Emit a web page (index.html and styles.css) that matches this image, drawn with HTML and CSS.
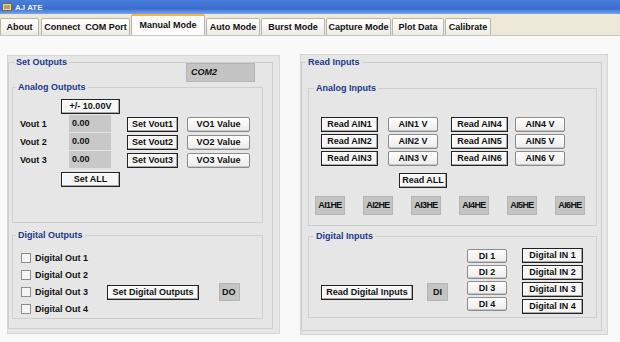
FILE: index.html
```
<!DOCTYPE html>
<html lang="en">
  <head>
    <meta charset="UTF-8" />
    <title>AJ ATE</title>
    <link rel="stylesheet" href="styles.css">
  </head>
  <body>
    <div class="titlebar">
      <svg class="app-icon" width="10" height="10" viewBox="0 0 10 10">
        <rect x="0.5" y="1.5" width="9" height="7" fill="#e8d9a0" stroke="#7a6a30" />
        <rect x="2" y="3" width="6" height="4" fill="#b8a060" />
      </svg>
      <span>AJ ATE</span>
    </div>

    <div class="tabs">
      <div class="tab tab-about">About</div>
      <div class="tab tab-connect">Connect&nbsp; COM Port</div>
      <div class="tab tab-manual active">Manual Mode</div>
      <div class="tab tab-auto">Auto Mode</div>
      <div class="tab tab-burst">Burst Mode</div>
      <div class="tab tab-capture">Capture Mode</div>
      <div class="tab tab-plot">Plot Data</div>
      <div class="tab tab-cal">Calibrate</div>
    </div>

    <div class="content">
      <!-- left side -->
      <div class="panel panel-left">
        <fieldset class="box outer-left">
          <legend>Set Outputs</legend>
          <div class="grey-box com">COM2</div>

          <fieldset class="box analog-out">
            <legend>Analog Outputs</legend>
            <div class="btn sq range">+/- 10.00V</div>
            <div class="vout-rows">
              <div class="vout-row">
                <span class="vout-label">Vout 1</span>
                <span class="textbox">0.00</span>
                <div class="btn sq set-vout">Set Vout1</div>
                <div class="btn round vo-value">VO1 Value</div>
              </div>
              <div class="vout-row">
                <span class="vout-label">Vout 2</span>
                <span class="textbox">0.00</span>
                <div class="btn sq set-vout">Set Vout2</div>
                <div class="btn round vo-value">VO2 Value</div>
              </div>
              <div class="vout-row">
                <span class="vout-label">Vout 3</span>
                <span class="textbox">0.00</span>
                <div class="btn sq set-vout">Set Vout3</div>
                <div class="btn round vo-value">VO3 Value</div>
              </div>
            </div>
            <div class="btn sq set-all">Set ALL</div>
          </fieldset>

          <fieldset class="box digital-out">
            <legend>Digital Outputs</legend>
            <div class="dout-body">
              <div class="checks">
                <label class="check-row"><span class="check"></span>Digital Out 1</label>
                <label class="check-row"><span class="check"></span>Digital Out 2</label>
                <label class="check-row"><span class="check"></span>Digital Out 3</label>
                <label class="check-row"><span class="check"></span>Digital Out 4</label>
              </div>
              <div class="btn sq set-dout">Set Digital Outputs</div>
              <div class="grey-box do-box">DO</div>
            </div>
          </fieldset>
        </fieldset>
      </div>

      <!-- right side -->
      <div class="panel panel-right">
        <fieldset class="box outer-right">
          <legend>Read Inputs</legend>

          <fieldset class="box analog-in">
            <legend>Analog Inputs</legend>
            <div class="ain-grid">
              <div class="ain-row">
                <div class="btn sq read-ain">Read AIN1</div>
                <div class="btn round ain-v">AIN1 V</div>
                <div class="btn sq read-ain second">Read AIN4</div>
                <div class="btn round ain-v last">AIN4 V</div>
              </div>
              <div class="ain-row">
                <div class="btn sq read-ain">Read AIN2</div>
                <div class="btn round ain-v">AIN2 V</div>
                <div class="btn sq read-ain second">Read AIN5</div>
                <div class="btn round ain-v last">AIN5 V</div>
              </div>
              <div class="ain-row">
                <div class="btn sq read-ain">Read AIN3</div>
                <div class="btn round ain-v">AIN3 V</div>
                <div class="btn sq read-ain second">Read AIN6</div>
                <div class="btn round ain-v last">AIN6 V</div>
              </div>
            </div>
            <div class="btn sq read-all">Read ALL</div>
            <div class="he-row">
              <div class="grey-box he">AI1HE</div>
              <div class="grey-box he">AI2HE</div>
              <div class="grey-box he">AI3HE</div>
              <div class="grey-box he">AI4HE</div>
              <div class="grey-box he">AI5HE</div>
              <div class="grey-box he">AI6HE</div>
            </div>
          </fieldset>

          <fieldset class="box digital-in">
            <legend>Digital Inputs</legend>
            <div class="din-body">
              <div class="btn sq read-din">Read Digital Inputs</div>
              <div class="grey-box di-box">DI</div>
              <div class="di-col">
                <div class="btn round di">DI 1</div>
                <div class="btn round di">DI 2</div>
                <div class="btn round di">DI 3</div>
                <div class="btn round di">DI 4</div>
              </div>
              <div class="din-col">
                <div class="btn sq din">Digital IN 1</div>
                <div class="btn sq din">Digital IN 2</div>
                <div class="btn sq din">Digital IN 3</div>
                <div class="btn sq din">Digital IN 4</div>
              </div>
            </div>
          </fieldset>
        </fieldset>
      </div>
    </div>
  </body>
</html>
```

FILE: styles.css
```
* {
  box-sizing: border-box;
}

body {
  margin: 0;
  width: 620px;
  height: 342px;
  overflow: hidden;
  background-color: #f9f9f9;
  font-family: "Liberation Sans", Arial, sans-serif;
  font-size: 9px;
  font-weight: bold;
  color: #111;
}

/* window title */
.titlebar {
  display: flex;
  align-items: center;
  height: 14px;
  padding-left: 2px;
  background: linear-gradient(#4a7fda 0%, #3a6ccf 60%, #7aa3e8 100%);
  color: #e8f0ff;
  font-size: 8px;
}

.app-icon {
  margin-right: 3px;
}

/* tab strip */
.tabs {
  display: flex;
  align-items: flex-end;
  height: 22px;
  background-color: #ece9d8;
  border-bottom: 1px solid #c9c7ba;
}

.tab {
  height: 17px;
  line-height: 16px;
  text-align: center;
  border: 1px solid #b9b7aa;
  border-bottom: none;
  border-radius: 2px 2px 0 0;
  background: linear-gradient(#ffffff, #ecebe5);
  white-space: nowrap;
  margin-right: 1px;
}

.tab.active {
  height: 21px;
  line-height: 18px;
  background: #fcfcfe;
  border-top: 2px solid #f1b544;
}

.tab-about { width: 39px; }
.tab-connect { width: 89px; margin-left: 1px; }
.tab-manual { width: 74px; }
.tab-auto { width: 54px; }
.tab-burst { width: 64px; }
.tab-capture { width: 65px; }
.tab-plot { width: 52px; }
.tab-cal { width: 46px; }

/* main area */
.content {
  display: flex;
  padding: 19px 0 0 7px;
}

.panel {
  background-color: #e6e6e6;
  border: 1px solid #d6d6d6;
}

.panel-left {
  width: 273px;
  height: 279px;
  padding: 1px 6px 0 0;
}

.panel-right {
  width: 308px;
  height: 281px;
  margin-left: 20px;
  margin-top: -1px;
  padding: 2px 5px 0 0;
}

fieldset {
  margin: 0;
  padding: 0;
  min-width: 0;
}

fieldset.box {
  border: 1px solid #cfcfcf;
}

fieldset.box legend {
  padding: 0 2px;
  line-height: 11px;
  color: #20388c;
}

.outer-left {
  height: 272px;
}

.outer-left > legend {
  margin-left: 5px;
}

.outer-right {
  height: 274px;
}

.outer-right > legend {
  margin-left: 4px;
}

/* shared controls */
.btn {
  height: 15px;
  line-height: 13px;
  text-align: center;
  white-space: nowrap;
}

.btn.sq {
  background-color: #f6f6f6;
  border: 1px solid #222;
  box-shadow: inset -1px -1px 0 #a8a8a8, inset 1px 1px 0 #ffffff;
}

.btn.round {
  background: linear-gradient(#ffffff, #ebebeb);
  border: 1px solid #8b8b8b;
  border-radius: 2px;
  box-shadow: inset 0 -1px 0 #c8c8c8;
}

.grey-box {
  background-color: #c4c4c4;
  border: 1px solid #b4b4b4;
}

/* set outputs */
.com {
  width: 69px;
  height: 19px;
  line-height: 17px;
  padding-left: 4px;
  margin: -5px 0 0 177px;
  font-style: italic;
}

.analog-out {
  width: 251px;
  height: 141px;
  margin: 0 0 0 3px;
}

.analog-out > legend {
  margin-left: 3px;
}

.range {
  width: 59px;
  margin: 6px 0 1px 48px;
}

.vout-rows {
  display: flex;
  flex-direction: column;
}

.vout-row {
  display: flex;
  align-items: center;
  height: 18px;
}

.vout-label {
  width: 56px;
  padding-left: 7px;
}

.textbox {
  width: 42px;
  height: 18px;
  line-height: 17px;
  padding-left: 3px;
  background-color: #c8c8c8;
  border-bottom: 1px solid #e2e2e2;
}

.set-vout {
  width: 51px;
  margin-left: 16px;
}

.vo-value {
  width: 63px;
  margin-left: 9px;
}

.set-all {
  width: 59px;
  margin: 3px 0 0 48px;
}

.digital-out {
  width: 251px;
  height: 89px;
  margin: 7px 0 0 3px;
}

.digital-out > legend {
  margin-left: 3px;
}

.dout-body {
  display: flex;
  align-items: flex-start;
  margin-top: 8px;
}

.checks {
  display: flex;
  flex-direction: column;
  width: 94px;
}

.check-row {
  display: flex;
  align-items: center;
  height: 17px;
  padding-left: 8px;
}

.check {
  width: 10px;
  height: 10px;
  margin-right: 4px;
  background-color: #f4f4f4;
  border: 1px solid #8e8e8e;
}

.set-dout {
  width: 92px;
  margin-top: 36px;
}

.do-box {
  width: 21px;
  height: 18px;
  line-height: 16px;
  padding-left: 2px;
  margin: 34px 0 0 20px;
}

/* read inputs */
.analog-in {
  width: 289px;
  height: 143px;
  margin: 15px 0 0 6px;
}

.analog-in > legend {
  margin-left: 5px;
}

.ain-grid {
  display: flex;
  flex-direction: column;
  gap: 2px;
  margin-top: 23px;
}

.ain-row {
  display: flex;
}

.read-ain {
  width: 57px;
  margin-left: 12px;
}

.read-ain.second {
  margin-left: 13px;
}

.ain-v {
  width: 50px;
  margin-left: 10px;
}

.ain-v.last {
  margin-left: 7px;
}

.read-all {
  width: 48px;
  margin: 7px 0 0 90px;
}

.he-row {
  display: flex;
  gap: 18px;
  margin: 8px 0 0 6px;
}

.he {
  width: 30px;
  height: 19px;
  line-height: 17px;
  text-align: center;
  overflow: hidden;
  letter-spacing: -0.6px;
}

.digital-in {
  width: 289px;
  height: 87px;
  margin: 5px 0 0 6px;
}

.digital-in > legend {
  margin-left: 5px;
}

.din-body {
  display: flex;
  align-items: flex-start;
  margin-top: 6px;
}

.read-din {
  width: 92px;
  margin: 37px 0 0 12px;
}

.di-box {
  width: 21px;
  height: 18px;
  line-height: 16px;
  text-align: center;
  margin: 35px 0 0 14px;
}

.di-col,
.din-col {
  display: flex;
  flex-direction: column;
  gap: 2px;
}

.di-col {
  margin: 1px 0 0 19px;
}

.din-col {
  margin: 0 0 0 15px;
}

.di {
  width: 40px;
  height: 14px;
  line-height: 12px;
}

.din {
  width: 61px;
  height: 15px;
  line-height: 13px;
}
```
